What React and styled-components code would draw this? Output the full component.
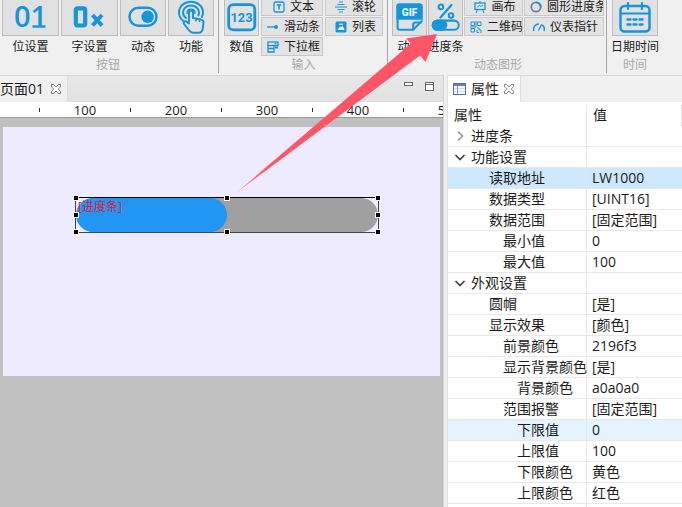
import styled, { createGlobalStyle } from "styled-components";

const GlobalStyle = createGlobalStyle`
  * {
    box-sizing: border-box;
  }
  body {
    margin: 0;
    background-color: #f0f0f0;
    color: #1c1c1c;
    font-family: "Open Sans", "Noto Sans CJK SC", sans-serif;
    font-size: 12px;
  }
  button {
    padding: 0;
    color: inherit;
    font: inherit;
  }
`;

const blue = "#1795dc";

const Page = styled.div`
  display: flex;
  flex-direction: column;
  height: 100vh;
  overflow: hidden;
  position: relative;
`;

/* ribbon */
const Ribbon = styled.header`
  display: flex;
  flex: none;
  height: 75px;
  padding-bottom: 2px;
  overflow: hidden;
`;
const Group = styled.section`
  display: flex;
  flex-direction: column;
  flex: none;
  padding: 0 ${({ $right = 4 }) => $right}px 0 ${({ $left = 4 }) => $left}px;
  border-right: ${({ $last }) => ($last ? "none" : "1px solid #a6a6a6")};
`;
const GroupBody = styled.div`
  display: flex;
  gap: ${({ $gap = 2 }) => $gap}px;
  height: 60px;
  margin-top: -3px;
`;
const GroupCaption = styled.h2`
  margin: 0;
  color: #a9a9a9;
  font-size: 12px;
  font-weight: 400;
  line-height: 16px;
  text-align: center;
`;
const Tool = styled.div`
  display: flex;
  flex-direction: column;
  width: ${({ $width }) => $width}px;
`;
const ToolButton = styled.button`
  display: flex;
  align-items: center;
  justify-content: center;
  height: 39px;
  border: 1px solid #bebebe;
  background-color: #e1e1e1;
`;
const ToolName = styled.span`
  display: flex;
  justify-content: center;
  line-height: 22px;
  white-space: nowrap;
`;
const SmallTools = styled.div`
  display: flex;
  flex-direction: column;
  gap: 1px;
  width: ${({ $width }) => $width}px;
`;
const SmallButton = styled.button`
  display: flex;
  align-items: center;
  justify-content: ${({ $start }) => ($start ? "flex-start" : "center")};
  gap: 5px;
  height: 19px;
  padding: 1px 0 0 ${({ $start }) => ($start ? 5 : 3)}px;
  border: 1px solid #c9c9c9;
  background-color: #e3e3e3;
  line-height: 16px;
  white-space: nowrap;
  overflow: hidden;

  svg {
    flex: none;
  }
`;

/* editor */
const Workspace = styled.main`
  display: flex;
  flex: 1;
  min-height: 0;
`;
const Editor = styled.section`
  display: flex;
  flex-direction: column;
  flex: 1;
  min-width: 0;
  border-right: 1px solid #d4d4d4;
  overflow: hidden;
`;
const TabBar = styled.div`
  display: flex;
  flex: none;
  height: 27px;
  border-top: 1px solid #dadada;
  background: ${({ $plain }) =>
    $plain ? "#f0f0f0" : "linear-gradient(#e8e8e8, #e1e1e1)"};
`;
const Tab = styled.div`
  display: flex;
  align-items: center;
  gap: ${({ $gap = 7 }) => $gap}px;
  padding: 0 6px 0 ${({ $left = 0 }) => $left}px;
  border-right: 1px solid #dedede;
  background-color: ${({ $white }) => ($white ? "#fff" : "#f0f0f0")};
  font-size: 14px;
  line-height: 20px;
  white-space: nowrap;
`;
const IconButton = styled.button`
  display: flex;
  border: none;
  background: none;
`;
const WindowButtons = styled.div`
  display: flex;
  align-items: flex-start;
  gap: 11px;
  margin-left: auto;
  padding: 6px 8px 0 0;
`;
const Ruler = styled.div`
  display: flex;
  flex: none;
  height: 16px;
  padding-left: 39px;
  border-bottom: 1px solid #999;
  background-color: #fff;
  overflow: hidden;
`;
const RulerStep = styled.div`
  display: flex;
  flex: none;
  align-items: center;
  width: 91px;
  font-size: 13px;
  line-height: 14px;

  &::before {
    content: "";
    width: 1px;
    height: 4px;
    background-color: #333;
  }
  span {
    flex: 1;
    text-align: center;
  }
`;
const Canvas = styled.div`
  flex: 1;
  padding: 9px 3px;
  background-color: #c0c0c0;
`;
const Screen = styled.div`
  position: relative;
  height: 249px;
  background-color: #eeeaff;
`;
const Selection = styled.div`
  position: absolute;
  left: 72px;
  top: 70px;
  width: 304px;
  height: 36px;
  border: 1px solid #444;
  border-top-color: #000;
`;
const Progress = styled.div`
  height: 34px;
  border-radius: 17px;
  background-color: #a0a0a0;
  overflow: hidden;
`;
const ProgressFill = styled.div`
  width: 50%;
  height: 100%;
  border-radius: 17px;
  background-color: #2196f3;
`;
const ProgressName = styled.span`
  position: absolute;
  left: 2px;
  top: 0;
  color: #e0183c;
  font-size: 12px;
  line-height: 18px;
`;
const Handle = styled.i`
  position: absolute;
  left: ${({ $x }) => $x};
  top: ${({ $y }) => $y};
  width: 4px;
  height: 4px;
  transform: translate(-50%, -50%);
  background-color: #000;
  box-shadow: 0 0 0 1px #f4f4f4;
`;

/* properties */
const Properties = styled.aside`
  flex: none;
  width: 235px;
  margin-left: 3px;
  border-left: 1px solid #e2e2e2;
  background-color: #fff;
  overflow: hidden;
`;
const PropertyTable = styled.table`
  width: 100%;
  margin-top: 3px;
  border-collapse: separate;
  border-spacing: 0;
  table-layout: fixed;
  font-size: 14px;
  line-height: 20px;
`;
const HeadCell = styled.th`
  width: ${({ $width }) => $width || "auto"};
  height: 21px;
  padding: 0 0 1px 6px;
  border-right: 1px solid #e6e6e6;
  font-weight: 400;
  text-align: left;
`;
const Row = styled.tr`
  background-color: ${({ $tone }) => $tone || "#fff"};
`;
const NameCell = styled.td`
  height: 21px;
  padding: 0 0 0 ${({ $level }) => [5, 41, 55, 69][$level]}px;
  border-right: 1px solid #e6e6e6;
  border-bottom: 1px solid #e9e9e9;
  white-space: nowrap;
`;
const ValueCell = styled.td`
  padding: 0 0 0 5px;
  border-bottom: 1px solid #e9e9e9;
  white-space: nowrap;
`;
const Toggle = styled.button`
  display: flex;
  align-items: center;
  gap: 4px;
  border: none;
  background: none;
  line-height: 20px;
`;

const Arrow = styled.svg`
  position: absolute;
  left: 0;
  top: 0;
  pointer-events: none;
`;

const BigIcon = ({ children }) => (
  <svg
    width="36"
    height="37"
    viewBox="0 0 36 37"
    fill="none"
    stroke={blue}
    strokeWidth="2.5"
    strokeLinecap="round"
    strokeLinejoin="round"
    aria-hidden="true"
  >
    {children}
  </svg>
);

const SmallIcon = ({ children }) => (
  <svg
    width="12"
    height="12"
    viewBox="0 0 12 12"
    fill="none"
    stroke={blue}
    strokeWidth="1.3"
    aria-hidden="true"
  >
    {children}
  </svg>
);

const BitIcon = () => (
  <BigIcon>
    <text x="1" y="29" fill={blue} stroke="none" fontSize="29" fontWeight="600">
      01
    </text>
    <path d="M19.500 28.500h13" strokeLinecap="butt" />
  </BigIcon>
);

const WordIcon = () => (
  <BigIcon>
    <rect x="3.800" y="10.300" width="9.400" height="17.200" rx="2" strokeWidth="4.200" />
    <path d="M20.500 17l9.500 10.500M30 17l-9.500 10.500" strokeWidth="4" strokeLinecap="butt" />
  </BigIcon>
);

const SwitchIcon = () => (
  <BigIcon>
    <rect x="4.500" y="9.800" width="27" height="18" rx="9" />
    <circle cx="22.600" cy="18.800" r="6.200" fill={blue} stroke="none" />
  </BigIcon>
);

const TouchIcon = () => (
  <BigIcon>
    <g strokeWidth="2">
      <path d="M11 23.500C7.500 21 6 18 6 14.500C6 8 11.500 3.800 18 3.800S30 8 30 14.500c0 1.500-.4 3-1 4.500" />
      <path d="M13 20c-2-1.500-3-3.300-3-5.500 0-4.200 3.500-7 8-7s8 2.800 8 7c0 1-.2 2-.6 3" />
      <path d="M16 24v-9.500a2 2 0 0 1 4 0v5.500l8 1.600c1.800.5 2.600 1.500 2.500 3.200l-.8 6c-.4 2.700-1.700 3.900-4 3.900h-5.500c-1.900 0-3-.7-4-2.200L11 26c-1-1.800 1-3.400 2.700-2.300L16 25.500" />
      <path d="M23 21v2M26.500 21.500v2" strokeWidth="1.500" />
      <path d="M14 15.500c0-2.700 1.600-4.300 4-4.300s4 1.600 4 4.300" strokeWidth="1.500" />
    </g>
  </BigIcon>
);

const NumberIcon = () => (
  <BigIcon>
    <rect x="4" y="5.500" width="28.500" height="27.500" rx="5" strokeWidth="3" />
    <text
      x="18"
      y="24"
      fill={blue}
      stroke="none"
      textAnchor="middle"
      fontFamily="Roboto"
      fontSize="14"
      fontWeight="700"
    >
      123
    </text>
  </BigIcon>
);

const GifIcon = () => (
  <BigIcon>
    <path
      d="M7 4h22a3.500 3.500 0 0 1 3.500 3.500V22h-29V7.500A3.500 3.500 0 0 1 7 4z"
      fill={blue}
      stroke="none"
    />
    <path d="M5 22v8.500c0 1.700.8 2.500 2.500 2.500H22l9.500-9.500" strokeWidth="2.200" />
    <path d="M22 32.500v-5c0-1.700.8-2.500 2.500-2.500h6" strokeWidth="2.200" />
    <text
      x="18"
      y="18"
      fill="#e8f4fb"
      stroke="none"
      textAnchor="middle"
      fontFamily="Roboto"
      fontSize="11"
      fontWeight="900"
    >
      GIF
    </text>
  </BigIcon>
);

const ProgressIcon = () => (
  <BigIcon>
    <path d="M24.500 6L12.500 19.500" />
    <circle cx="13" cy="8" r="2.500" strokeWidth="2.200" />
    <circle cx="24" cy="17.500" r="2.500" strokeWidth="2.200" />
    <rect x="4" y="23" width="28.500" height="10" rx="5" strokeWidth="2.200" />
    <rect x="3" y="22" width="17" height="12" rx="6" fill={blue} stroke="none" />
  </BigIcon>
);

const CalendarIcon = () => (
  <BigIcon>
    <rect x="3.500" y="8" width="29" height="25.500" rx="4" />
    <path d="M4 15.500h28M11 5v6M25 5v6" strokeWidth="2.200" />
    <path
      d="M10.500 21.500h3M16.500 21.500h3M22.500 21.500h3M10.500 26.500h3M16.500 26.500h3M22.500 26.500h3"
      strokeWidth="2.400"
    />
  </BigIcon>
);

const smallIcons = {
  text: (
    <SmallIcon>
      <rect x="1" y="1" width="10" height="10" rx="1.500" />
      <path d="M3.800 4h4.400M6 4v4.500" strokeWidth="1.600" />
    </SmallIcon>
  ),
  slider: (
    <SmallIcon>
      <path d="M0 6h8" />
      <circle cx="9" cy="6" r="2" fill={blue} stroke="none" />
    </SmallIcon>
  ),
  combo: (
    <SmallIcon>
      <rect x="1" y="1" width="10" height="3.500" />
      <path d="M1 4v7h6V4M1 7.500h6M7.500 2.500h2" />
      <path d="M8 5.500h3v2H8z" fill={blue} stroke="none" />
    </SmallIcon>
  ),
  wheel: (
    <SmallIcon>
      <path d="M2.500 3.500h7M0 6h12M2.500 8.500h7M4 11h4M4 1h4" strokeWidth="1.200" />
    </SmallIcon>
  ),
  list: (
    <SmallIcon>
      <rect x="0.500" y="0.500" width="11" height="11" rx="1.500" fill={blue} stroke="none" />
      <path d="M2.500 9L5 5.500l1 1 1.500-2L9.500 9z" fill="#fff" stroke="none" />
      <path d="M4 3.200h4" stroke="#fff" strokeWidth="1" />
    </SmallIcon>
  ),
  canvas: (
    <SmallIcon>
      <rect x="1" y="2" width="10" height="6.500" />
      <path d="M6 0v2M3.500 8.500L2 12M8.500 8.500L10 12M3.500 6l2-1.500 1.500 1 2-1.500" strokeWidth="1" />
    </SmallIcon>
  ),
  qr: (
    <SmallIcon>
      <path d="M1 1h3.500v3.500H1zM7.500 1H11v3.500H7.500zM1 7.500h3.500V11H1zM6 0v6H0M7 7h2v2h2v3M7 9v2.500h2" strokeWidth="1" />
    </SmallIcon>
  ),
  ring: (
    <SmallIcon>
      <circle cx="6" cy="6" r="4.700" stroke="#75809a" strokeWidth="1.800" />
      <path d="M6 1.300a4.700 4.700 0 0 1 4.700 4.700" strokeWidth="1.800" />
    </SmallIcon>
  ),
  gauge: (
    <SmallIcon>
      <path d="M1 10a5.200 5.200 0 0 1 5-7M8.500 3.700A5.200 5.200 0 0 1 11 10" strokeWidth="1.500" />
      <path d="M5.500 9.500L8.500 3.500" />
    </SmallIcon>
  ),
};

const CloseIcon = () => (
  <svg width="10" height="10" viewBox="0 0 10 10" fill="#fafafa" stroke="#777" strokeWidth="0.900" aria-hidden="true">
    <path d="M.5.5h2.300L5 3 7.200.5h2.300v2.300L7.200 5l2.300 2.200v2.300H7.200L5 7 2.800 9.500H.5V7.200L2.800 5 .5 2.800z" />
  </svg>
);

const TableIcon = () => (
  <svg width="13" height="12" viewBox="0 0 13 12" aria-hidden="true">
    <rect x="0.500" y="0.500" width="12" height="11" fill="#f3f7fd" stroke="#5c6f9b" />
    <path d="M1 1h11v2H1z" fill="#6d80aa" />
    <path d="M1 5.500h11M1 8.500h11" stroke="#d3dcec" />
    <path d="M4.500 3v8" stroke="#8fa0c4" />
  </svg>
);

const Chevron = ({ open }) => (
  <svg
    width="14"
    height="12"
    viewBox="0 0 14 12"
    fill="none"
    stroke={open ? "#404040" : "#9a9a9a"}
    strokeWidth="1.700"
    aria-hidden="true"
  >
    <path d={open ? "M2.500 4l4.500 4.500L11.500 4" : "M5 1.500L9.500 6 5 10.500"} />
  </svg>
);

function BigTool({ id, name, width, icon }) {
  return (
    <Tool $width={width}>
      <ToolButton type="button" aria-labelledby={id}>
        {icon}
      </ToolButton>
      <ToolName id={id}>{name}</ToolName>
    </Tool>
  );
}

function SmallTool({ name, icon, start }) {
  return (
    <SmallButton type="button" $start={start}>
      {smallIcons[icon]}
      {name}
    </SmallButton>
  );
}

const properties = [
  { name: "进度条", level: 0, open: false },
  { name: "功能设置", level: 0, open: true },
  { name: "读取地址", level: 1, value: "LW1000", tone: "#cde8ff" },
  { name: "数据类型", level: 1, value: "[UINT16]" },
  { name: "数据范围", level: 1, value: "[固定范围]" },
  { name: "最小值", level: 2, value: "0" },
  { name: "最大值", level: 2, value: "100" },
  { name: "外观设置", level: 0, open: true },
  { name: "圆帽", level: 1, value: "[是]" },
  { name: "显示效果", level: 1, value: "[颜色]" },
  { name: "前景颜色", level: 2, value: "2196f3" },
  { name: "显示背景颜色", level: 2, value: "[是]" },
  { name: "背景颜色", level: 3, value: "a0a0a0" },
  { name: "范围报警", level: 2, value: "[固定范围]" },
  { name: "下限值", level: 3, value: "0", tone: "#e5f3ff" },
  { name: "上限值", level: 3, value: "100" },
  { name: "下限颜色", level: 3, value: "黄色" },
  { name: "上限颜色", level: 3, value: "红色" },
];

const handles = [
  ["0%", "0%"],
  ["50%", "0%"],
  ["100%", "0%"],
  ["0%", "50%"],
  ["100%", "50%"],
  ["0%", "100%"],
  ["50%", "100%"],
  ["100%", "100%"],
];

function App() {
  return (
    <Page>
      <GlobalStyle />
      <Ribbon>
        <Group $left={2}>
          <GroupBody>
            <BigTool id="bit" name="位设置" width={57} icon={<BitIcon />} />
            <BigTool id="word" name="字设置" width={57} icon={<WordIcon />} />
            <BigTool id="dynamic" name="动态" width={46} icon={<SwitchIcon />} />
            <BigTool id="touch" name="功能" width={46} icon={<TouchIcon />} />
          </GroupBody>
          <GroupCaption>按钮</GroupCaption>
        </Group>
        <Group $left={5}>
          <GroupBody>
            <BigTool id="number" name="数值" width={35} icon={<NumberIcon />} />
            <SmallTools $width={62}>
              <SmallTool name="文本" icon="text" />
              <SmallTool name="滑动条" icon="slider" />
              <SmallTool name="下拉框" icon="combo" />
            </SmallTools>
            <SmallTools $width={58}>
              <SmallTool name="滚轮" icon="wheel" />
              <SmallTool name="列表" icon="list" />
            </SmallTools>
          </GroupBody>
          <GroupCaption>输入</GroupCaption>
        </Group>
        <Group $right={2}>
          <GroupBody $gap={1}>
            <BigTool id="gif" name="动图" width={35} icon={<GifIcon />} />
            <BigTool id="progress" name="进度条" width={35} icon={<ProgressIcon />} />
            <SmallTools $width={59}>
              <SmallTool name="画布" icon="canvas" />
              <SmallTool name="二维码" icon="qr" start />
            </SmallTools>
            <SmallTools $width={80}>
              <SmallTool name="圆形进度条" icon="ring" start />
              <SmallTool name="仪表指针" icon="gauge" />
            </SmallTools>
          </GroupBody>
          <GroupCaption>动态图形</GroupCaption>
        </Group>
        <Group $left={5} $right={5} $last>
          <GroupBody>
            <BigTool id="datetime" name="日期时间" width={46} icon={<CalendarIcon />} />
          </GroupBody>
          <GroupCaption>时间</GroupCaption>
        </Group>
      </Ribbon>

      <Workspace>
        <Editor>
          <TabBar>
            <Tab>
              页面01
              <IconButton type="button" aria-label="关闭">
                <CloseIcon />
              </IconButton>
            </Tab>
            <WindowButtons>
              <IconButton type="button" aria-label="最小化">
                <svg width="10" height="5" aria-hidden="true">
                  <rect x="0.500" y="0.500" width="8" height="3" fill="#fff" stroke="#666" />
                </svg>
              </IconButton>
              <IconButton type="button" aria-label="最大化">
                <svg width="10" height="10" aria-hidden="true">
                  <rect x="0.500" y="0.500" width="8" height="8" fill="#fff" stroke="#666" />
                  <path d="M0 2.500h9" stroke="#666" />
                </svg>
              </IconButton>
            </WindowButtons>
          </TabBar>
          <Ruler>
            {[100, 200, 300, 400, 500].map((mark) => (
              <RulerStep key={mark}>
                <span>{mark}</span>
              </RulerStep>
            ))}
          </Ruler>
          <Canvas>
            <Screen>
              <Selection>
                <Progress>
                  <ProgressFill />
                </Progress>
                <ProgressName>[进度条]</ProgressName>
                {handles.map(([x, y]) => (
                  <Handle key={x + y} $x={x} $y={y} />
                ))}
              </Selection>
            </Screen>
          </Canvas>
        </Editor>

        <Properties>
          <TabBar $plain>
            <Tab $left={5} $gap={5} $white>
              <TableIcon />
              属性
              <IconButton type="button" aria-label="关闭">
                <CloseIcon />
              </IconButton>
            </Tab>
          </TabBar>
          <PropertyTable>
            <thead>
              <tr>
                <HeadCell $width="139px">属性</HeadCell>
                <HeadCell>值</HeadCell>
              </tr>
            </thead>
            <tbody>
              {properties.map(({ name, level, value, open, tone }, index) => (
                <Row key={index} $tone={tone}>
                  <NameCell $level={level}>
                    {level === 0 ? (
                      <Toggle type="button" aria-expanded={open}>
                        <Chevron open={open} />
                        {name}
                      </Toggle>
                    ) : (
                      name
                    )}
                  </NameCell>
                  <ValueCell>{value}</ValueCell>
                </Row>
              ))}
              <Row>
                <NameCell $level={0} />
                <ValueCell />
              </Row>
            </tbody>
          </PropertyTable>
        </Properties>
      </Workspace>

      <Arrow width="445" height="200" aria-hidden="true">
        <defs>
          <linearGradient id="arrowFill" x1="0" y1="1" x2="1" y2="0">
            <stop offset="0" stopColor="#ff5566" stopOpacity="0.500" />
            <stop offset="0.150" stopColor="#ff5566" />
          </linearGradient>
        </defs>
        <path d="M236 193L411 43.500 406 38.500 437 34 425.500 62 420 55.500z" fill="url(#arrowFill)" />
      </Arrow>
    </Page>
  );
}

export default App;
